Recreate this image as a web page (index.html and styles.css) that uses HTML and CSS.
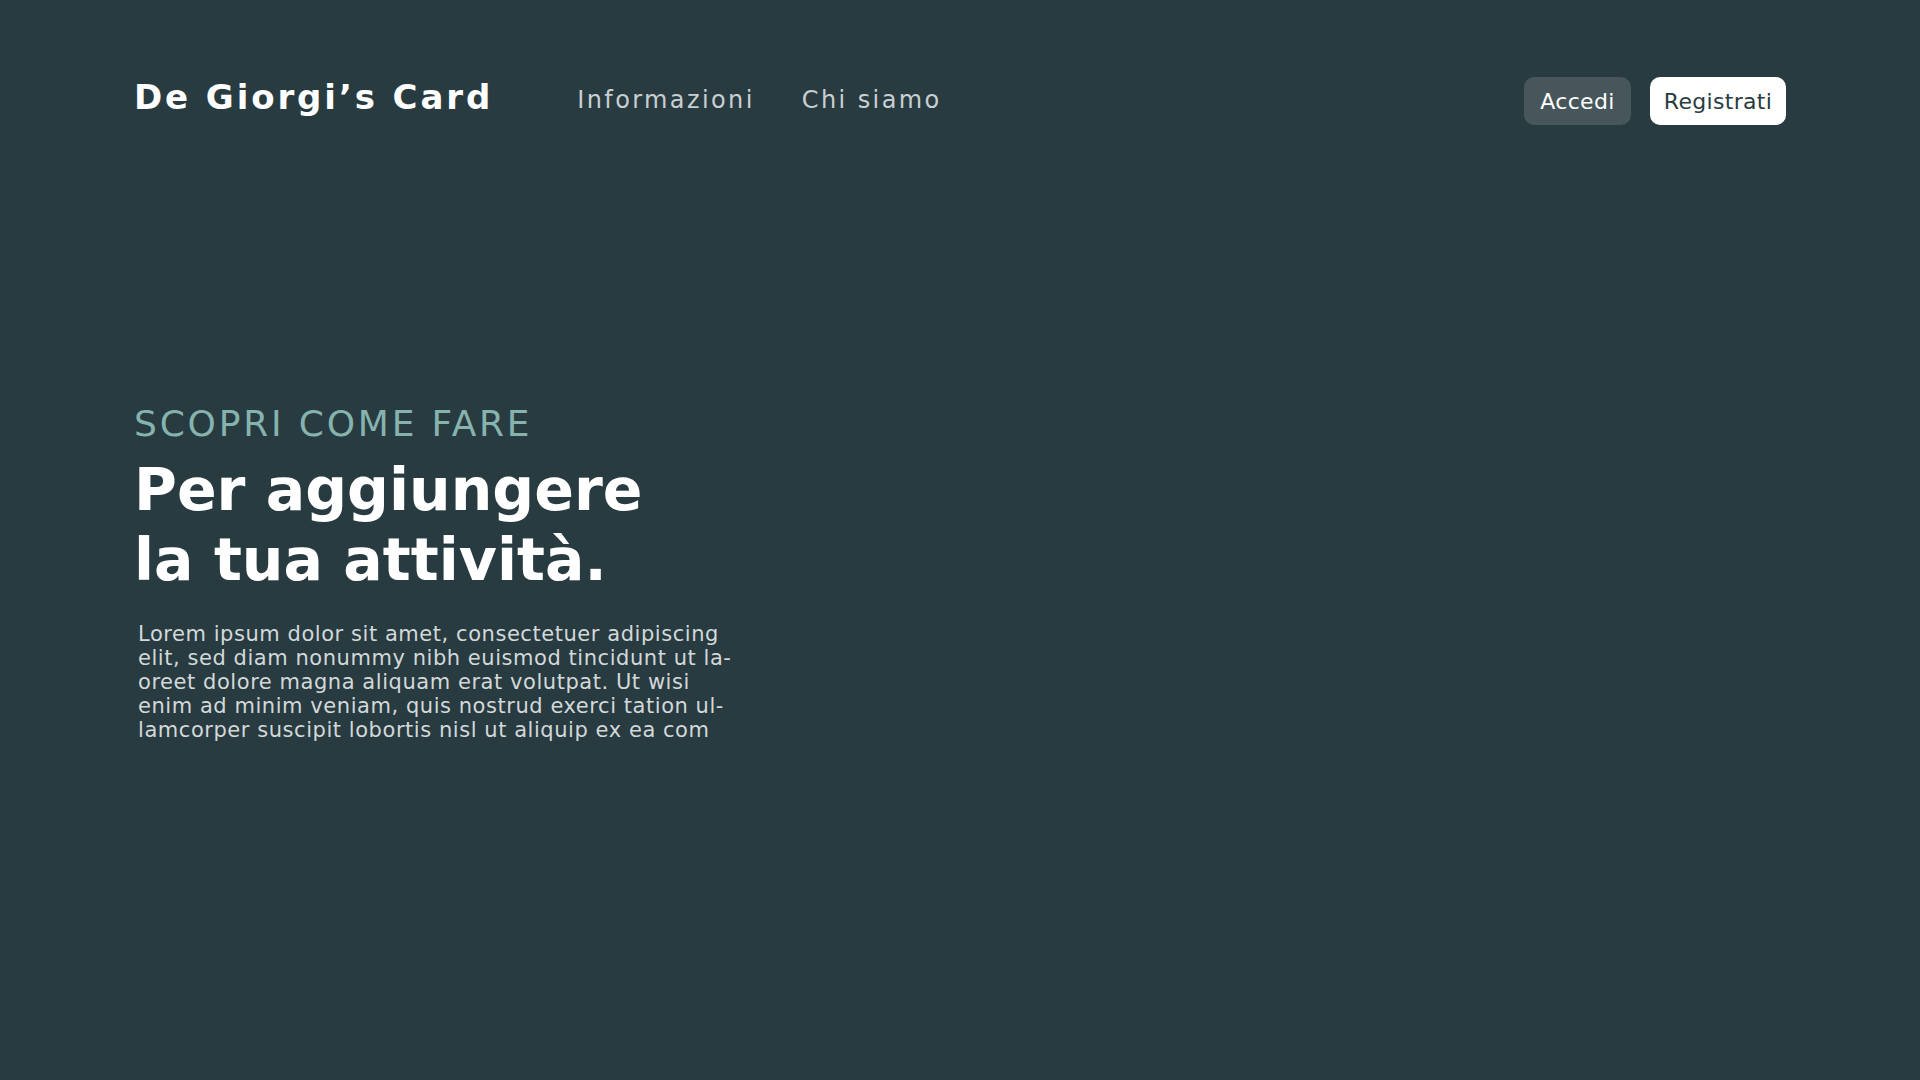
FILE: index.html
```html
<!DOCTYPE html>
<html lang="it">
<head>
<meta charset="utf-8">
<title>De Giorgi's Card</title>
<link rel="stylesheet" href="styles.css">
</head>
<body>
<div class="page">
  <header class="topbar">
    <div class="brand">De Giorgi’s Card</div>
    <nav class="nav">
      <a class="nav-link" href="#">Informazioni</a>
      <a class="nav-link" href="#">Chi siamo</a>
    </nav>
    <div class="actions">
      <a class="btn btn-ghost" href="#">Accedi</a>
      <a class="btn btn-solid" href="#">Registrati</a>
    </div>
  </header>
  <main class="hero">
    <p class="eyebrow">SCOPRI COME FARE</p>
    <h1 class="title">Per aggiungere<br>la tua attività.</h1>
    <p class="lead">Lorem ipsum dolor sit amet, consectetuer adipiscing<br>elit, sed diam nonummy nibh euismod tincidunt ut la-<br>oreet dolore magna aliquam erat volutpat. Ut wisi<br>enim ad minim veniam, quis nostrud exerci tation ul-<br>lamcorper suscipit lobortis nisl ut aliquip ex ea com</p>
  </main>
</div>
</body>
</html>
```
FILE: styles.css
```css
* { box-sizing: border-box; }
html, body { margin: 0; padding: 0; }
body {
  background: #283b41;
  width: 1920px;
  height: 1080px;
  overflow: hidden;
  font-family: "DejaVu Sans", "Noto Sans", sans-serif;
}
.page {
  padding: 77px 134px 0 134px;
}
.topbar {
  display: flex;
  align-items: center;
  height: 48px;
}
.brand {
  font-family: "DejaVu Sans", sans-serif;
  font-weight: 700;
  font-size: 34px;
  color: #ffffff;
  letter-spacing: 2.9px;
  margin-top: -8px;
}
.nav {
  display: flex;
  gap: 47px;
  margin-left: 84px;
  margin-top: -2px;
}
.nav-link {
  font-size: 24px;
  letter-spacing: 2.4px;
  color: #c9cfd1;
  text-decoration: none;
}
.actions {
  margin-left: auto;
  display: flex;
  gap: 19px;
}
.btn {
  display: flex;
  align-items: center;
  justify-content: center;
  height: 48px;
  border-radius: 10px;
  font-size: 22px;
  letter-spacing: 0.3px;
  text-decoration: none;
}
.btn-ghost {
  width: 107px;
  background: #46565b;
  color: #ffffff;
}
.btn-solid {
  width: 136px;
  background: #ffffff;
  color: #283b41;
}
.hero {
  padding-top: 277px;
}
.eyebrow {
  margin: 0;
  font-size: 36px;
  line-height: 44px;
  letter-spacing: 2.8px;
  color: #86b3ae;
  font-weight: 400;
}
.title {
  margin: 9px 0 0;
  font-family: "DejaVu Sans", sans-serif;
  font-weight: 700;
  font-size: 58.5px;
  line-height: 70px;
  color: #ffffff;
}
.lead {
  margin: 27px 0 0 4px;
  font-size: 21px;
  line-height: 24px;
  letter-spacing: 0.55px;
  color: #d3d8d9;
}
```
